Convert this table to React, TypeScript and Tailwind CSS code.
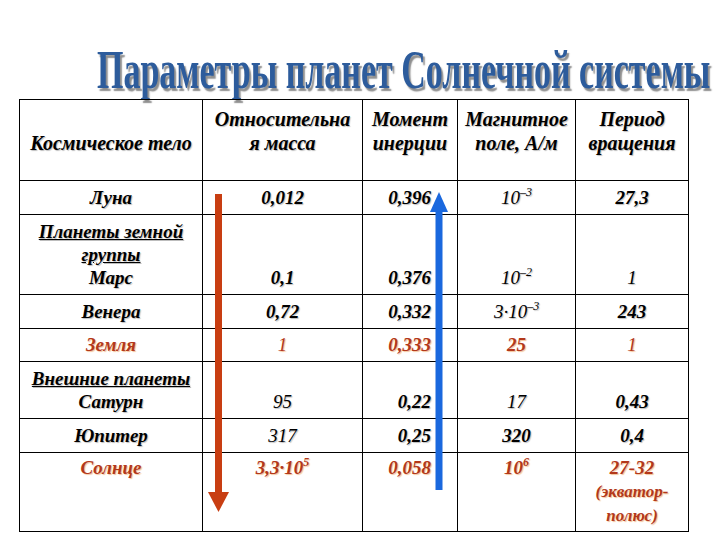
import React from "react";

const RED = "text-[#b3381a] [text-shadow:1px_1px_1px_#f3c49a]";
const BLK = "text-black [text-shadow:1px_1px_1px_#bdbdbd]";

type Cell = { c: React.ReactNode; light?: boolean; right?: boolean };

function Sup({ b, e }: { b: string; e: string }) {
  return (
    <span>
      {b}
      <sup className="text-[12px] top-[-0.65em]">{e}</sup>
    </span>
  );
}

export default function App() {
  const rowH = ["h-[34px]", "h-[80px]", "h-[34px]", "h-[33px]", "h-[57px]", "h-[34px]", "h-[79px]"];
  const valign = ["justify-center", "justify-end pb-[4px]", "justify-center", "justify-center", "justify-end pb-[4px]", "justify-center", "justify-start pt-[3px]"];
  const red = [false, false, false, true, false, false, true];
  const rows: { name: React.ReactNode; cells: Cell[] }[] = [
    { name: "Луна", cells: [{ c: "0,012" }, { c: "0,396", right: true }, { c: <Sup b="10" e="–3" />, light: true }, { c: "27,3" }] },
    {
      name: (
        <>
          <span className="underline leading-[23px]">Планеты земной</span>
          <span className="underline leading-[23px]">группы</span>
          <span>Марс</span>
        </>
      ),
      cells: [{ c: "0,1" }, { c: "0,376", right: true }, { c: <Sup b="10" e="–2" />, light: true }, { c: "1", light: true }],
    },
    { name: "Венера", cells: [{ c: "0,72" }, { c: "0,332", right: true }, { c: <Sup b="3·10" e="–3" />, light: true }, { c: "243" }] },
    { name: "Земля", cells: [{ c: "1", light: true }, { c: "0,333", right: true }, { c: "25" }, { c: "1", light: true }] },
    {
      name: (
        <>
          <span className="underline leading-[22px]">Внешние планеты</span>
          <span>Сатурн</span>
        </>
      ),
      cells: [{ c: "95", light: true }, { c: "0,22", right: true }, { c: "17", light: true }, { c: "0,43" }],
    },
    { name: "Юпитер", cells: [{ c: "317", light: true }, { c: "0,25", right: true }, { c: "320" }, { c: "0,4" }] },
    {
      name: "Солнце",
      cells: [
        { c: <Sup b="3,3·10" e="5" /> },
        { c: "0,058", right: true },
        { c: <Sup b="10" e="6" /> },
        {
          c: (
            <>
              <span>27-32</span>
              <span className="text-[17px] leading-[24px]">(экватор-</span>
              <span className="text-[17px] leading-[24px]">полюс)</span>
            </>
          ),
        },
      ],
    },
  ];
  const widths = ["w-[160px]", "w-[95px]", "w-[118px]", "w-[113px]"];

  return (
    <div className="w-[720px] h-[540px] bg-white overflow-hidden [font-family:'Liberation_Serif','Times_New_Roman','DejaVu_Serif',serif]">
      <div className="h-[99px] pl-[97px] pt-[48px]">
        <span className="inline-block origin-top-left scale-y-[1.6] text-[34px] leading-[28px] font-bold text-[#2d5c9c] [text-shadow:2px_2px_1px_#8f8f8f] whitespace-nowrap">
          Параметры планет Солнечной системы
        </span>
      </div>
      <div className="relative ml-[19px] w-[670px]">
        <div className="flex flex-col border-l border-t border-black italic font-bold text-[19px]">
          <div className="flex h-[81px] text-[20px] leading-[24px] text-center">
            <div className="w-[183px] border-r border-b border-black pt-[31px] [text-shadow:1px_1px_1px_#bdbdbd]">Космическое тело</div>
            <div className="w-[160px] border-r border-b border-black pt-[7px] [text-shadow:1px_1px_1px_#bdbdbd]">
              Относительна
              <br />я масса
            </div>
            <div className="w-[95px] border-r border-b border-black pt-[7px] [text-shadow:1px_1px_1px_#bdbdbd]">
              Момент
              <br />
              инерции
            </div>
            <div className="w-[118px] border-r border-b border-black pt-[7px] [text-shadow:1px_1px_1px_#bdbdbd]">
              Магнитное
              <br />
              поле, А/м
            </div>
            <div className="w-[113px] border-r border-b border-black pt-[7px] [text-shadow:1px_1px_1px_#bdbdbd]">
              Период
              <br />
              вращения
            </div>
          </div>
          {rows.map((r, i) => (
            <div key={i} className={`flex ${rowH[i]} leading-[24px] ${red[i] ? RED : BLK}`}>
              <div className={`w-[183px] border-r border-b border-black flex flex-col items-center text-center ${valign[i]}`}>{r.name}</div>
              {r.cells.map((c, j) => (
                <div
                  key={j}
                  className={`${widths[j]} border-r border-b border-black flex flex-col ${c.right ? "items-end pr-[26px]" : "items-center"} text-center ${valign[i]} ${c.light ? "font-normal" : ""}`}
                >
                  {c.c}
                </div>
              ))}
            </div>
          ))}
        </div>
        <svg className="absolute left-[188px] top-[95px]" width="24" height="320" viewBox="0 0 24 320">
          <rect x="8" y="0" width="7" height="302" fill="#c83e12" />
          <polygon points="1,298 22,298 11.5,318" fill="#c83e12" />
        </svg>
        <svg className="absolute left-[409px] top-[93px]" width="22" height="300" viewBox="0 0 22 300">
          <polygon points="11,0 2,20 20,20" fill="#1a68de" />
          <rect x="7.5" y="19" width="7" height="279" fill="#1a68de" />
        </svg>
      </div>
    </div>
  );
}
